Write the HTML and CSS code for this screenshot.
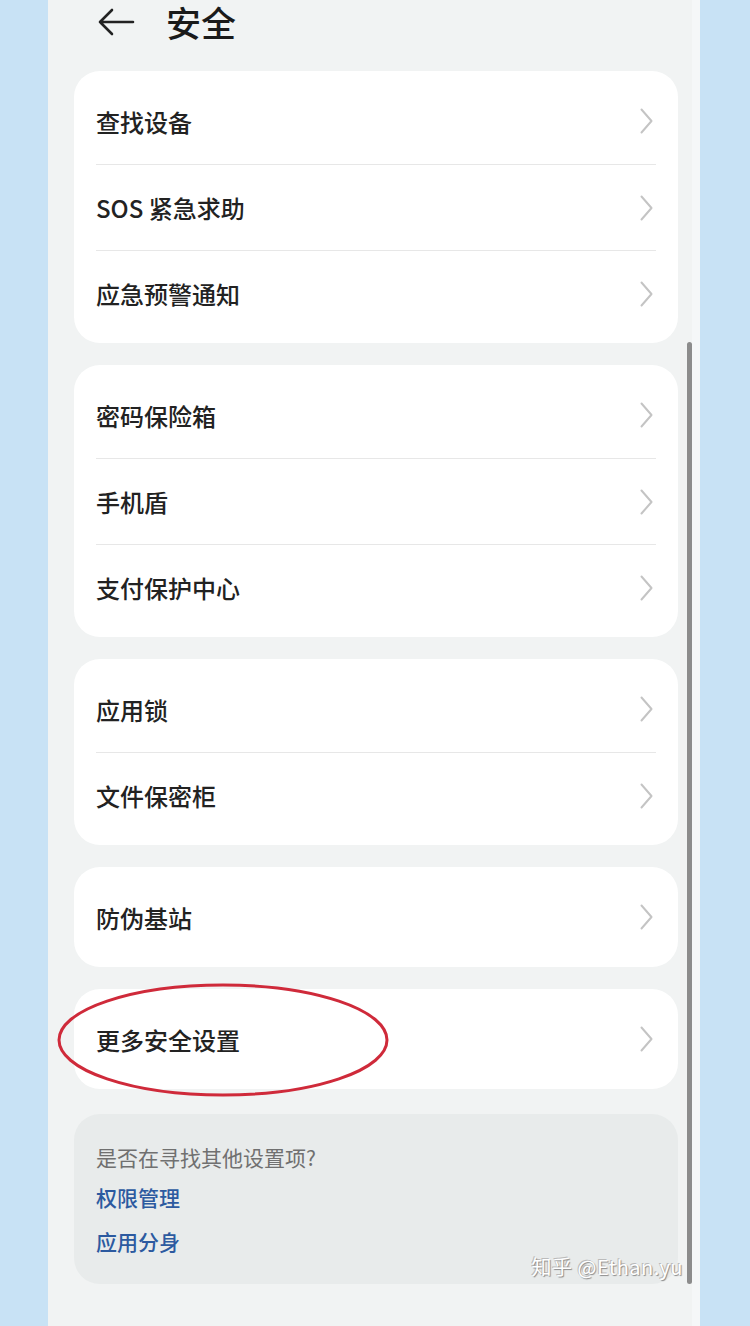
FILE: index.html
```html
<!DOCTYPE html>
<html lang="zh-CN">
<head>
<meta charset="utf-8">
<title>安全</title>
<link rel="stylesheet" href="styles.css">
</head>
<body>
<div class="frame">
  <div class="side side-left"></div>
  <main class="phone">
    <header class="topbar">
      <svg class="back" width="40" height="32" viewBox="0 0 40 32">
        <path d="M16 4 L4 16 L16 28 M4 16 H37" fill="none" stroke="#222" stroke-width="2.6" stroke-linecap="round" stroke-linejoin="round"/>
      </svg>
      <h1 class="title">安全</h1>
    </header>

    <section class="card">
      <div class="row"><span>查找设备</span><svg class="chev" width="13" height="26" viewBox="0 0 13 26"><path d="M1.5 1.5 L11.5 13 L1.5 24.5" fill="none" stroke="#c4c4c4" stroke-width="2" stroke-linecap="round" stroke-linejoin="round"/></svg></div>
      <div class="row"><span>SOS 紧急求助</span><svg class="chev" width="13" height="26" viewBox="0 0 13 26"><path d="M1.5 1.5 L11.5 13 L1.5 24.5" fill="none" stroke="#c4c4c4" stroke-width="2" stroke-linecap="round" stroke-linejoin="round"/></svg></div>
      <div class="row"><span>应急预警通知</span><svg class="chev" width="13" height="26" viewBox="0 0 13 26"><path d="M1.5 1.5 L11.5 13 L1.5 24.5" fill="none" stroke="#c4c4c4" stroke-width="2" stroke-linecap="round" stroke-linejoin="round"/></svg></div>
    </section>

    <section class="card">
      <div class="row"><span>密码保险箱</span><svg class="chev" width="13" height="26" viewBox="0 0 13 26"><path d="M1.5 1.5 L11.5 13 L1.5 24.5" fill="none" stroke="#c4c4c4" stroke-width="2" stroke-linecap="round" stroke-linejoin="round"/></svg></div>
      <div class="row"><span>手机盾</span><svg class="chev" width="13" height="26" viewBox="0 0 13 26"><path d="M1.5 1.5 L11.5 13 L1.5 24.5" fill="none" stroke="#c4c4c4" stroke-width="2" stroke-linecap="round" stroke-linejoin="round"/></svg></div>
      <div class="row"><span>支付保护中心</span><svg class="chev" width="13" height="26" viewBox="0 0 13 26"><path d="M1.5 1.5 L11.5 13 L1.5 24.5" fill="none" stroke="#c4c4c4" stroke-width="2" stroke-linecap="round" stroke-linejoin="round"/></svg></div>
    </section>

    <section class="card">
      <div class="row"><span>应用锁</span><svg class="chev" width="13" height="26" viewBox="0 0 13 26"><path d="M1.5 1.5 L11.5 13 L1.5 24.5" fill="none" stroke="#c4c4c4" stroke-width="2" stroke-linecap="round" stroke-linejoin="round"/></svg></div>
      <div class="row"><span>文件保密柜</span><svg class="chev" width="13" height="26" viewBox="0 0 13 26"><path d="M1.5 1.5 L11.5 13 L1.5 24.5" fill="none" stroke="#c4c4c4" stroke-width="2" stroke-linecap="round" stroke-linejoin="round"/></svg></div>
    </section>

    <section class="card">
      <div class="row"><span>防伪基站</span><svg class="chev" width="13" height="26" viewBox="0 0 13 26"><path d="M1.5 1.5 L11.5 13 L1.5 24.5" fill="none" stroke="#c4c4c4" stroke-width="2" stroke-linecap="round" stroke-linejoin="round"/></svg></div>
    </section>

    <section class="card">
      <div class="row"><span>更多安全设置</span><svg class="chev" width="13" height="26" viewBox="0 0 13 26"><path d="M1.5 1.5 L11.5 13 L1.5 24.5" fill="none" stroke="#c4c4c4" stroke-width="2" stroke-linecap="round" stroke-linejoin="round"/></svg></div>
      <svg class="mark" width="334" height="116" viewBox="0 0 334 116">
        <ellipse cx="167" cy="58" rx="164" ry="55" fill="none" stroke="#cf2a3a" stroke-width="3"/>
      </svg>
    </section>

    <section class="hint">
      <p class="hint-q">是否在寻找其他设置项?</p>
      <a class="hint-link">权限管理</a>
      <a class="hint-link">应用分身</a>
    </section>

    <div class="scrollbar"></div>
    <div class="watermark">知乎 @Ethan.yu</div>
  </main>
  <div class="side side-right"></div>
</div>
</body>
</html>
```

FILE: styles.css
```css
* { box-sizing: border-box; }

html, body {
  margin: 0;
  padding: 0;
  background: #c8e2f5;
}

body {
  font-family: "Noto Sans CJK SC", "Noto Sans", "Liberation Sans", sans-serif;
  color: #1f1f1f;
}

.frame {
  display: flex;
  width: 750px;
  height: 1326px;
  overflow: hidden;
}

.side {
  background: #c8e2f5;
  flex: none;
}
.side-left { width: 48px; }
.side-right { width: 50px; }

.phone {
  position: relative;
  width: 652px;
  flex: none;
  background: #f1f3f3;
  padding: 0 14px 0 26px;
  display: flex;
  flex-direction: column;
  gap: 22px;
  border-right: 8px solid #f5f7f8;
}

.topbar {
  height: 50px;
  display: flex;
  align-items: center;
  gap: 30px;
  padding-left: 22px;
  padding-bottom: 7px;
  margin-bottom: -1px;
}

.back { display: block; }

.title {
  margin: 0;
  font-size: 35px;
  font-weight: 500;
  line-height: 40px;
  color: #1a1a1a;
}

.card {
  background: #ffffff;
  border-radius: 26px;
  padding: 7px 22px;
  position: relative;
}

.row {
  height: 86px;
  display: flex;
  align-items: center;
  justify-content: space-between;
  font-size: 24px;
  font-weight: 500;
  color: #222222;
}
.row + .row { border-top: 1px solid #e7e7e7; }

.chev {
  display: block;
  margin-right: 3px;
}

.mark {
  position: absolute;
  left: -18px;
  top: -7px;
  pointer-events: none;
}

.hint {
  margin-top: 3px;
  background: #e8ebeb;
  border-radius: 26px;
  padding: 28px 22px 20px;
  height: 170px;
  display: flex;
  flex-direction: column;
  align-items: flex-start;
}

.hint-q {
  margin: 0 0 10px;
  font-size: 21px;
  line-height: 30px;
  color: #707070;
}

.hint-link {
  font-size: 21px;
  line-height: 30px;
  margin-bottom: 14px;
  color: #2c5aa0;
  font-weight: 500;
}

.scrollbar {
  position: absolute;
  left: 639px;
  top: 342px;
  width: 5px;
  height: 942px;
  border-radius: 3px;
  background: #8c8c8c;
}

.watermark {
  position: absolute;
  right: 9px;
  top: 1252px;
  font-size: 20px;
  color: #ffffff;
  text-shadow: 1px 1px 1px #8a8a8a, -1px -1px 0 #bbbbbb;
  letter-spacing: 0.5px;
}
```
